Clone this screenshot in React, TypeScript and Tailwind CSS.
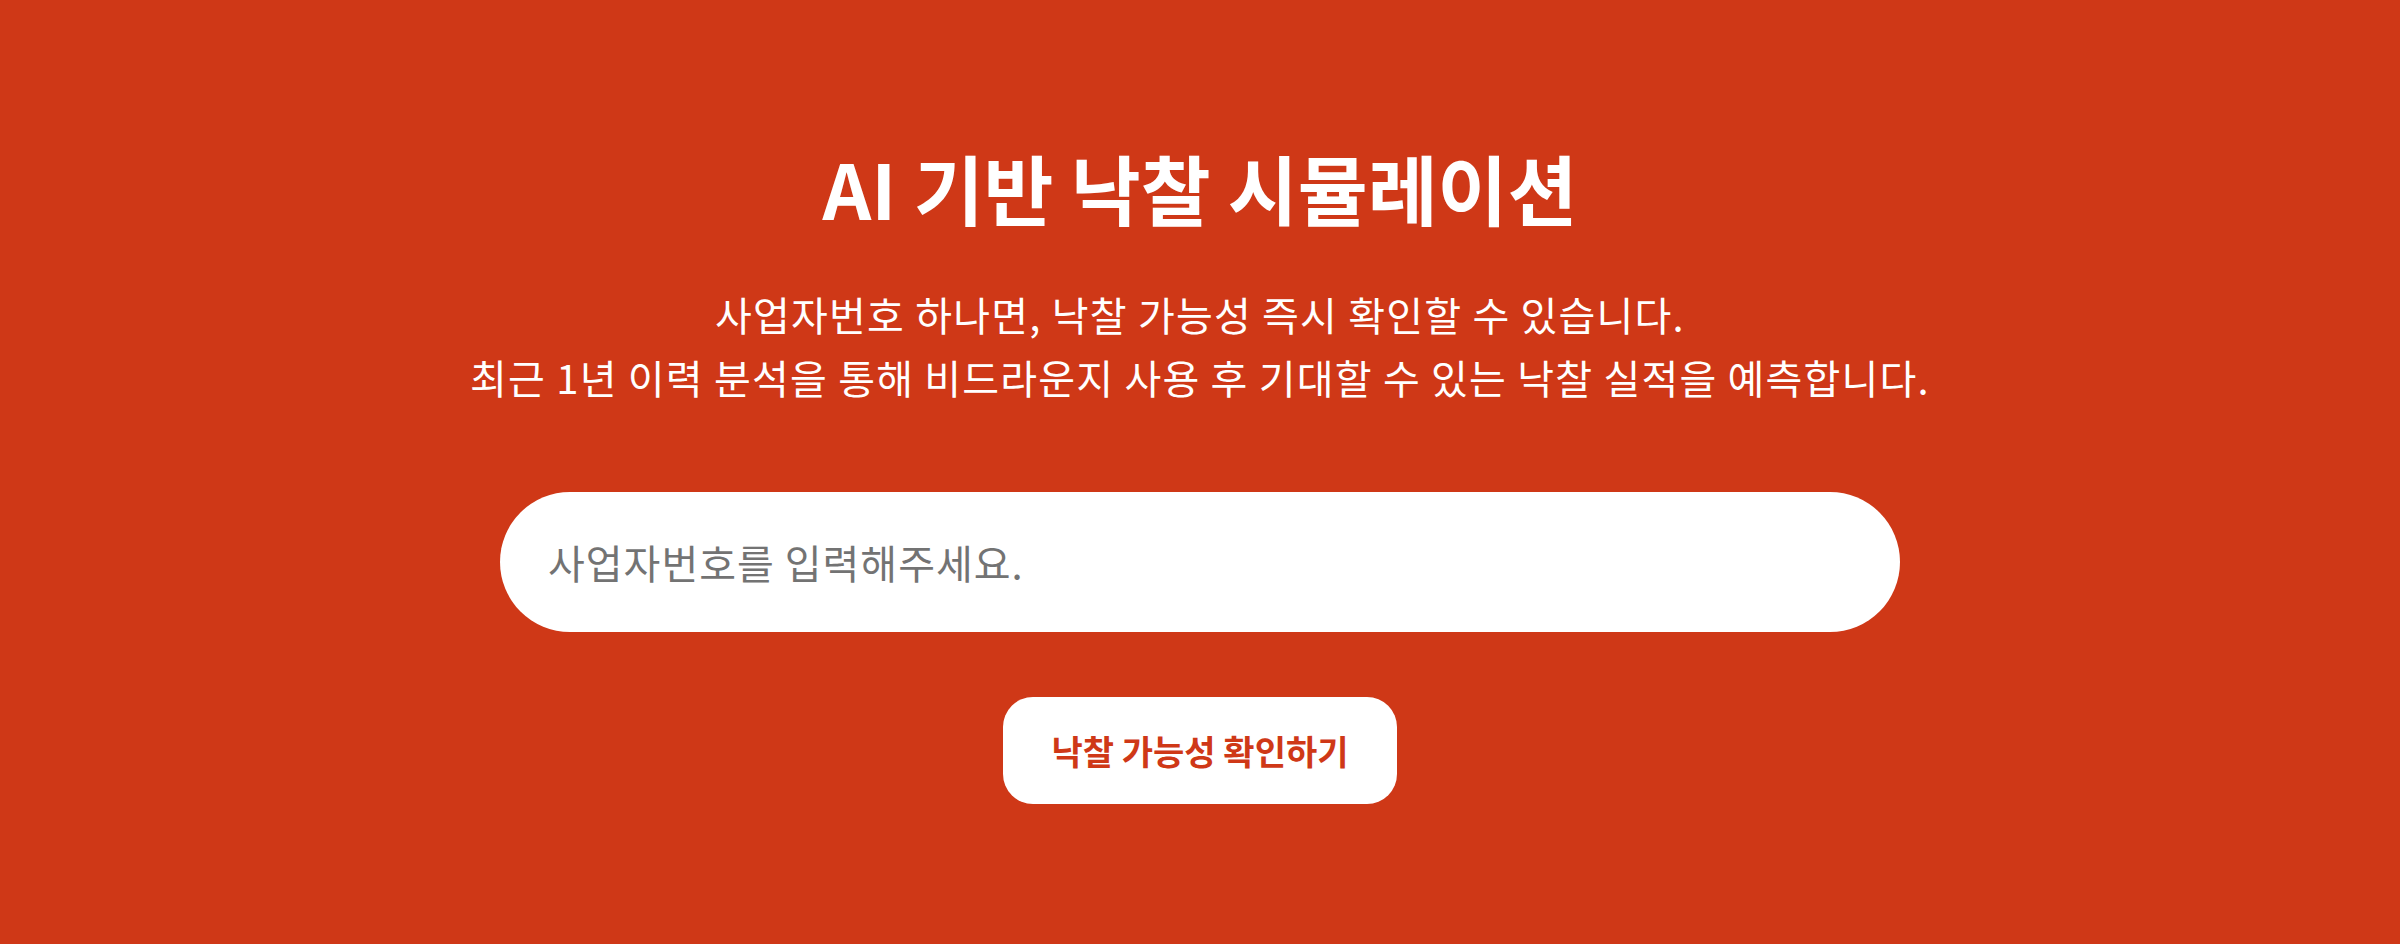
import React from "react";

export default function App() {
  return (
    <div
      className="w-full h-[944px] bg-[#cf3817] flex flex-col items-center pt-[142px]"
      style={{ fontFamily: '"Noto Sans CJK KR", "Noto Sans", sans-serif' }}
    >
      <h1 className="text-[76px] font-bold leading-[90px] text-white tracking-[0px]">
        AI 기반 낙찰 시뮬레이션
      </h1>
      <p className="mt-[51px] text-[40px] leading-[63px] text-white text-center tracking-[1.2px]">
        사업자번호 하나면, 낙찰 가능성 즉시 확인할 수 있습니다.
        <br />
        최근 1년 이력 분석을 통해 비드라운지 사용 후 기대할 수 있는 낙찰 실적을 예측합니다.
      </p>
      <input
        type="text"
        placeholder="사업자번호를 입력해주세요."
        className="mt-[83px] w-[1400px] h-[140px] rounded-full bg-white pl-[48px] pr-[48px] text-[40px] tracking-[1px] text-[#333333] placeholder:text-[#737373] outline-none"
      />
      <button className="mt-[65px] w-[394px] h-[107px] rounded-[30px] bg-white text-[#cf3817] text-[34px] font-bold">
        낙찰 가능성 확인하기
      </button>
    </div>
  );
}
